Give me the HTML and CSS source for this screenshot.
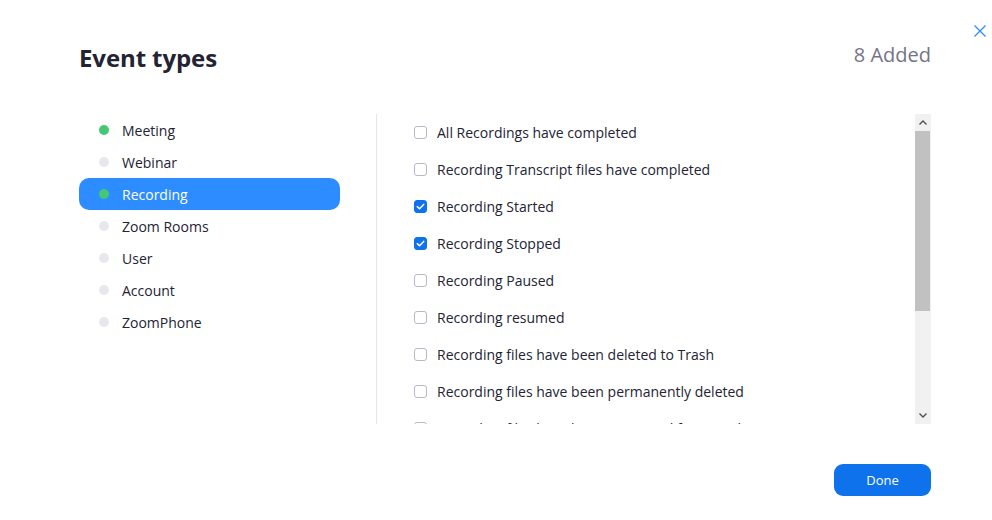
FILE: index.html
```html
<!DOCTYPE html>
<html lang="en">
<head>
<meta charset="utf-8">
<title>Event types</title>
<link rel="stylesheet" href="styles.css">
</head>
<body>
<div class="dialog">
  <button class="close" aria-label="Close">
    <svg width="12" height="12" viewBox="0 0 12 12"><path d="M0.5 0.5L11.5 11.5M11.5 0.5L0.5 11.5" stroke="#2D8CFF" stroke-width="1.3" fill="none"/></svg>
  </button>
  <header class="head">
    <h1 class="title">Event types</h1>
    <span class="count">8 Added</span>
  </header>
  <div class="body">
    <ul class="cats">
      <li class="cat"><span class="dot on"></span>Meeting</li>
      <li class="cat"><span class="dot"></span>Webinar</li>
      <li class="cat active"><span class="dot on"></span>Recording</li>
      <li class="cat"><span class="dot"></span>Zoom Rooms</li>
      <li class="cat"><span class="dot"></span>User</li>
      <li class="cat"><span class="dot"></span>Account</li>
      <li class="cat"><span class="dot"></span>ZoomPhone</li>
    </ul>
    <div class="events">
      <ul class="list">
        <li class="row"><span class="box"></span>All Recordings have completed</li>
        <li class="row"><span class="box"></span>Recording Transcript files have completed</li>
        <li class="row"><span class="box checked"><svg width="13" height="13" viewBox="0 0 13 13"><path d="M3.3 6.6L5.5 8.7L9.7 4.4" stroke="#fff" stroke-width="1.5" fill="none" stroke-linecap="round" stroke-linejoin="round"/></svg></span>Recording Started</li>
        <li class="row"><span class="box checked"><svg width="13" height="13" viewBox="0 0 13 13"><path d="M3.3 6.6L5.5 8.7L9.7 4.4" stroke="#fff" stroke-width="1.5" fill="none" stroke-linecap="round" stroke-linejoin="round"/></svg></span>Recording Stopped</li>
        <li class="row"><span class="box"></span>Recording Paused</li>
        <li class="row"><span class="box"></span>Recording resumed</li>
        <li class="row"><span class="box"></span>Recording files have been deleted to Trash</li>
        <li class="row"><span class="box"></span>Recording files have been permanently deleted</li>
        <li class="row"><span class="box"></span>Recording files have been recovered from trash</li>
      </ul>
      <div class="sb">
        <div class="sb-btn"><svg width="8" height="5" viewBox="0 0 8 5"><path d="M0.5 4.5L4 1L7.5 4.5" stroke="#505050" stroke-width="1.4" fill="none"/></svg></div>
        <div class="sb-track"><div class="sb-thumb"></div></div>
        <div class="sb-btn"><svg width="8" height="5" viewBox="0 0 8 5"><path d="M0.5 0.5L4 4L7.5 0.5" stroke="#505050" stroke-width="1.4" fill="none"/></svg></div>
      </div>
    </div>
  </div>
  <footer class="foot">
    <button class="done">Done</button>
  </footer>
</div>
</body>
</html>
```

FILE: styles.css
```css
* { box-sizing: border-box; }
html, body {
  margin: 0;
  padding: 0;
  background: #fff;
}
body {
  font-family: "Open Sans", "Liberation Sans", sans-serif;
  color: #232333;
  width: 992px;
  height: 520px;
  overflow: hidden;
}
ul { margin: 0; padding: 0; list-style: none; }

.dialog {
  position: relative;
  padding: 41px 61px 0 79px;
}
.close {
  position: absolute;
  top: 25px;
  left: 974px;
  width: 12px;
  height: 12px;
  padding: 0;
  border: 0;
  background: none;
  display: flex;
}
.head {
  display: flex;
  justify-content: space-between;
  align-items: flex-start;
  height: 33px;
}
.title {
  margin: 0;
  font-size: 24px;
  line-height: 33px;
  font-weight: 700;
  color: #232333;
  letter-spacing: -0.1px;
}
.count {
  font-size: 20px;
  line-height: 27px;
  color: #747487;
}

.body {
  display: flex;
  margin-top: 40px;
  height: 310px;
}
.cats {
  width: 261px;
  margin-right: 36px;
}
.cat {
  display: flex;
  align-items: center;
  height: 32px;
  padding-left: 20px;
  font-size: 14px;
  color: #232333;
  border-radius: 10px;
}
.cat.active {
  background: #2D8CFF;
  color: #fff;
}
.dot {
  width: 10px;
  height: 10px;
  border-radius: 50%;
  background: #E8E8EF;
  margin-right: 13px;
  flex: none;
}
.dot.on { background: #45C874; }

.events {
  flex: 1;
  display: flex;
  border-left: 1px solid #E4E4ED;
  padding-left: 37px;
  overflow: hidden;
}
.list {
  flex: 1;
  overflow: hidden;
}
.row {
  display: flex;
  align-items: center;
  height: 37px;
  font-size: 14px;
  color: #232333;
  white-space: nowrap;
}
.box {
  width: 13px;
  height: 13px;
  border: 1px solid #B9B8CA;
  border-radius: 3px;
  margin-right: 10px;
  flex: none;
  display: flex;
}
.box.checked {
  background: #0E72ED;
  border-color: #0E72ED;
}
.box.checked svg { margin: -1px; }

.sb {
  width: 16px;
  flex: none;
  display: flex;
  flex-direction: column;
  background: #F1F1F1;
}
.sb-btn {
  height: 17px;
  display: flex;
  align-items: center;
  justify-content: center;
}
.sb-track {
  flex: 1;
}
.sb-thumb {
  height: 180px;
  width: 15px;
  background: #C1C1C1;
}

.foot {
  display: flex;
  justify-content: flex-end;
  margin-top: 40px;
}
.done {
  width: 97px;
  height: 32px;
  border: 0;
  border-radius: 9px;
  background: #0E72ED;
  color: #fff;
  font-family: "Open Sans", "Liberation Sans", sans-serif;
  font-size: 13px;
  padding: 0;
}
```
